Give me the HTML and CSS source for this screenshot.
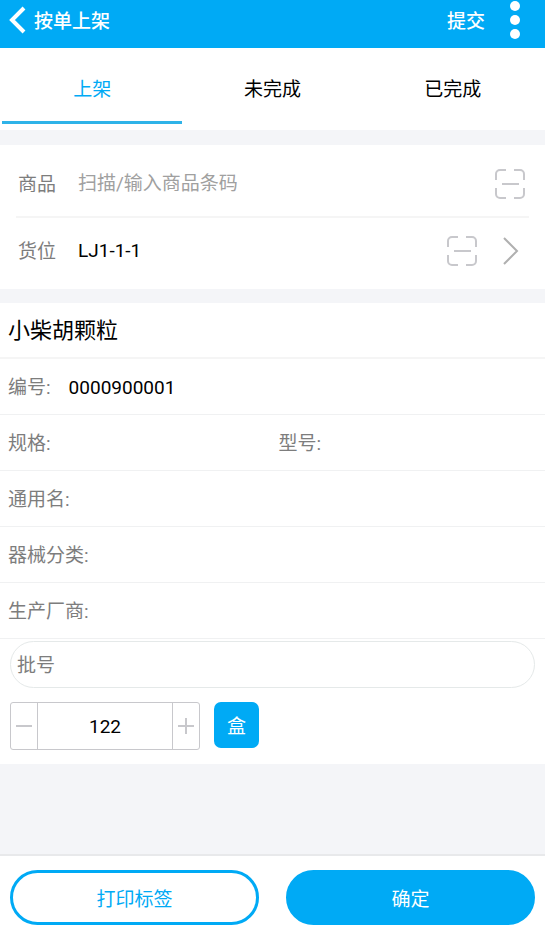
FILE: index.html
```html
<!DOCTYPE html>
<html lang="zh-CN">
<head>
<meta charset="utf-8">
<meta name="viewport" content="width=device-width, initial-scale=1">
<title>按单上架</title>
<link rel="stylesheet" href="styles.css">
</head>
<body>
<svg class="symbols" aria-hidden="true">
  <symbol id="scan" viewBox="0 0 32 32">
    <path d="M2 12V6a4 4 0 0 1 4-4h6M20 2h6a4 4 0 0 1 4 4v6M30 20v6a4 4 0 0 1-4 4h-6M12 30H6a4 4 0 0 1-4-4v-6M8 16h17"/>
  </symbol>
</svg>

<header class="topbar">
  <button class="back" type="button" aria-label="返回">
    <svg width="18" height="28" viewBox="0 0 18 28"><path d="M16 2L4 14l12 12"/></svg>
  </button>
  <h1 class="topbar-title">按单上架</h1>
  <button class="submit" type="button">提交</button>
  <button class="more" type="button" aria-label="更多">
    <svg width="12" height="40" viewBox="0 0 12 40"><circle cx="6" cy="6" r="5"/><circle cx="6" cy="20" r="5"/><circle cx="6" cy="34" r="5"/></svg>
  </button>
</header>

<nav class="tabs">
  <a class="tab active" href="#shelve" aria-current="page">上架</a>
  <a class="tab" href="#pending">未完成</a>
  <a class="tab" href="#done">已完成</a>
</nav>

<main>
  <section class="panel scan-panel">
    <div class="scan-row">
      <label for="goods">商品</label>
      <input id="goods" class="scan-input" type="text" placeholder="扫描/输入商品条码">
      <button class="icon-button" type="button" aria-label="扫描商品"><svg class="scan-icon"><use href="#scan"/></svg></button>
    </div>
    <div class="scan-row">
      <label for="location">货位</label>
      <input id="location" class="scan-input" type="text" value="LJ1-1-1">
      <button class="icon-button" type="button" aria-label="扫描货位"><svg class="scan-icon"><use href="#scan"/></svg></button>
      <button class="icon-button next" type="button" aria-label="选择货位"><svg width="18" height="30" viewBox="0 0 18 30"><path d="M2 2l13 13L2 28"/></svg></button>
    </div>
  </section>

  <section class="panel">
    <h2 class="product">小柴胡颗粒</h2>
    <dl class="details">
      <div class="detail-row"><dt>编号:</dt><dd>0000900001</dd></div>
      <div class="detail-row split">
        <div class="detail"><dt>规格:</dt><dd></dd></div>
        <div class="detail"><dt>型号:</dt><dd></dd></div>
      </div>
      <div class="detail-row"><dt>通用名:</dt><dd></dd></div>
      <div class="detail-row"><dt>器械分类:</dt><dd></dd></div>
      <div class="detail-row"><dt>生产厂商:</dt><dd></dd></div>
    </dl>
    <div class="entry">
      <input class="batch" type="text" placeholder="批号" aria-label="批号">
      <div class="quantity">
        <div class="stepper">
          <button type="button" aria-label="减少"><svg width="18" height="18" viewBox="0 0 18 18"><path d="M1 9h16"/></svg></button>
          <input type="text" inputmode="numeric" value="122" aria-label="数量">
          <button type="button" aria-label="增加"><svg width="18" height="18" viewBox="0 0 18 18"><path d="M1 9h16M9 1v16"/></svg></button>
        </div>
        <button class="unit" type="button">盒</button>
      </div>
    </div>
  </section>
</main>

<footer class="actions">
  <button class="action outline" type="button">打印标签</button>
  <button class="action filled" type="button">确定</button>
</footer>
</body>
</html>
```

FILE: styles.css
```css
* {
  box-sizing: border-box;
}

body {
  display: flex;
  flex-direction: column;
  min-height: 100vh;
  margin: 0;
  background: #f4f5f8;
  color: #000;
  font: 19px/28px Roboto, "Noto Sans CJK SC", sans-serif;
}

button,
input {
  padding: 0;
  border: 0;
  background: none;
  color: inherit;
  font: inherit;
}

input {
  min-width: 0;
}

svg {
  display: block;
  fill: none;
}

.symbols {
  position: absolute;
  width: 0;
  height: 0;
}

.topbar {
  display: flex;
  align-items: center;
  height: 48px;
  padding: 0 24px 8px 8px;
  background: #00aaf5;
  color: #fff;
  font-weight: 500;
}

.back path {
  stroke: #fff;
  stroke-width: 4;
}

.topbar-title {
  flex: 1;
  margin: 0 0 0 8px;
  padding-top: 4px;
  font-size: 19px;
  font-weight: 500;
}

.submit {
  padding-top: 4px;
}

.more {
  margin-left: 24px;
}

.more circle {
  fill: #fff;
}

.tabs {
  display: flex;
  height: 82px;
  padding: 0 2px;
  background: #fff;
}

.tab {
  display: flex;
  flex: 1;
  align-items: center;
  justify-content: center;
  margin-bottom: 6px;
  padding-top: 10px;
  border-bottom: 3px solid transparent;
  color: #000;
  text-decoration: none;
}

.tab.active {
  border-color: #2fb3e8;
  color: #00aaf5;
}

main {
  flex: 1;
}

.panel {
  margin-top: 14px;
  background: #fff;
}

.scan-panel {
  margin-top: 15px;
  padding: 0 16px;
}

.scan-row {
  display: flex;
  align-items: center;
  height: 71px;
  padding: 6px 3px 0 2px;
}

.scan-row + .scan-row {
  height: 73px;
  padding: 0 9px 6px 2px;
  border-top: 2px solid #f5f5f5;
}

.scan-row label {
  flex: none;
  width: 60px;
  padding-top: 3px;
  color: #7d7d7d;
}

.scan-input {
  flex: 1;
}

.scan-input::placeholder {
  color: #a0a0a0;
  opacity: 1;
}

.scan-icon {
  width: 32px;
  height: 32px;
  stroke: #c8c8cc;
  stroke-width: 2;
}

.next {
  margin-left: 24px;
}

.next path {
  stroke: #b0b0b0;
  stroke-width: 2;
}

.product {
  height: 56px;
  margin: 0;
  padding: 1px 8px 0;
  border-bottom: 2px solid #f5f5f5;
  font-size: 22px;
  font-weight: 400;
  line-height: 54px;
}

.details {
  margin: 0;
}

.detail-row {
  display: flex;
  align-items: center;
  height: 56px;
  padding: 3px 8px 0;
  border-bottom: 1px solid #f0f1f2;
}

.detail {
  display: flex;
  flex: 1;
}

.split {
  gap: 12px;
}

dt {
  color: #7d7d7d;
}

dd {
  margin: 0 0 0 18px;
}

.entry {
  padding: 2px 10px 14px;
}

.batch {
  display: block;
  width: 100%;
  height: 47px;
  padding: 2px 6px 0;
  border: 1px solid #e5e9e9;
  border-radius: 24px;
}

.batch::placeholder {
  color: #7d7d7d;
  opacity: 1;
}

.quantity {
  display: flex;
  gap: 14px;
  margin-top: 14px;
}

.stepper {
  display: flex;
  width: 190px;
  height: 48px;
  border: 1px solid #c8c8cc;
  border-radius: 3px;
}

.stepper button {
  display: flex;
  flex: none;
  align-items: center;
  justify-content: center;
  width: 26px;
}

.stepper path {
  stroke: #c8c8cc;
  stroke-width: 2;
}

.stepper input {
  flex: 1;
  padding-top: 2px;
  border: solid #c8c8cc;
  border-width: 0 1px;
  text-align: center;
}

.unit {
  width: 45px;
  height: 46px;
  padding-top: 4px;
  border-radius: 7px;
  background: #00aaf5;
  color: #fff;
}

.actions {
  display: flex;
  gap: 27px;
  padding: 14px 10px 3px;
  border-top: 2px solid #e8e9eb;
  background: #fff;
}

.action {
  flex: 1;
  height: 55px;
  padding-top: 4px;
  border: 3px solid #00aaf5;
  border-radius: 28px;
}

.outline {
  color: #00aaf5;
}

.filled {
  background: #00aaf5;
  color: #fff;
}
```
